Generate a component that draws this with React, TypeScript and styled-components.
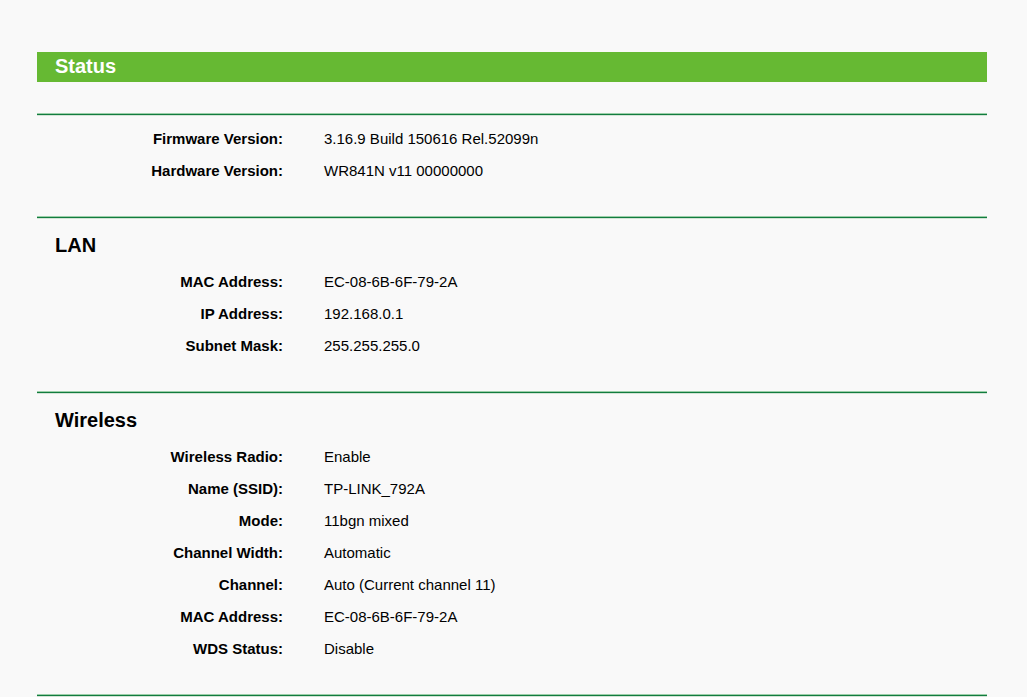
import React from "react";
import styled, { createGlobalStyle } from "styled-components";

const Global = createGlobalStyle`
  html, body { margin: 0; padding: 0; background: #f9f9f9; }
  body { font-family: Arial, "Liberation Sans", sans-serif; color: #000; }
`;

const Page = styled.div`
  width: 950px;
  margin: 0 0 0 37px;
  padding-top: 52px;
`;

const TitleBar = styled.div`
  height: 30px;
  background: #66b933;
  color: #fff;
  font-size: 20px;
  font-weight: bold;
  line-height: 28px;
  padding-left: 18px;
  margin-bottom: 31px;
`;

const Divider = styled.div`
  height: 1px;
  background: #127c3f;
  border-top: 1px solid #9ccfa9;
  border-bottom: 1px solid #d3e3d6;
`;

const Section = styled.section<{ $first?: boolean }>`
  padding-top: ${(p) => (p.$first ? "6px" : "10px")};
  padding-bottom: 29px;
`;

const Heading = styled.h2`
  margin: 0 0 4px 0;
  padding-left: 18px;
  font-size: 20px;
  font-weight: bold;
  line-height: 32px;
  height: 32px;
`;

const Grid = styled.div`
  display: grid;
  grid-template-columns: 246px 1fr;
  column-gap: 41px;
  padding-top: 1px;
  font-size: 15px;
  line-height: 32px;
`;

const Label = styled.div`
  text-align: right;
  font-weight: bold;
`;

const Value = styled.div``;

type Row = [string, string];

const sections: { title?: string; rows: Row[] }[] = [
  {
    rows: [
      ["Firmware Version:", "3.16.9 Build 150616 Rel.52099n"],
      ["Hardware Version:", "WR841N v11 00000000"],
    ],
  },
  {
    title: "LAN",
    rows: [
      ["MAC Address:", "EC-08-6B-6F-79-2A"],
      ["IP Address:", "192.168.0.1"],
      ["Subnet Mask:", "255.255.255.0"],
    ],
  },
  {
    title: "Wireless",
    rows: [
      ["Wireless Radio:", "Enable"],
      ["Name (SSID):", "TP-LINK_792A"],
      ["Mode:", "11bgn mixed"],
      ["Channel Width:", "Automatic"],
      ["Channel:", "Auto (Current channel 11)"],
      ["MAC Address:", "EC-08-6B-6F-79-2A"],
      ["WDS Status:", "Disable"],
    ],
  },
];

export default function App() {
  return (
    <>
      <Global />
      <Page>
        <TitleBar>Status</TitleBar>
        {sections.map((s, i) => (
          <React.Fragment key={i}>
            <Divider />
            <Section $first={!s.title}>
              {s.title && <Heading>{s.title}</Heading>}
              <Grid>
                {s.rows.map(([l, v]) => (
                  <React.Fragment key={l}>
                    <Label>{l}</Label>
                    <Value>{v}</Value>
                  </React.Fragment>
                ))}
              </Grid>
            </Section>
          </React.Fragment>
        ))}
        <Divider />
      </Page>
    </>
  );
}
